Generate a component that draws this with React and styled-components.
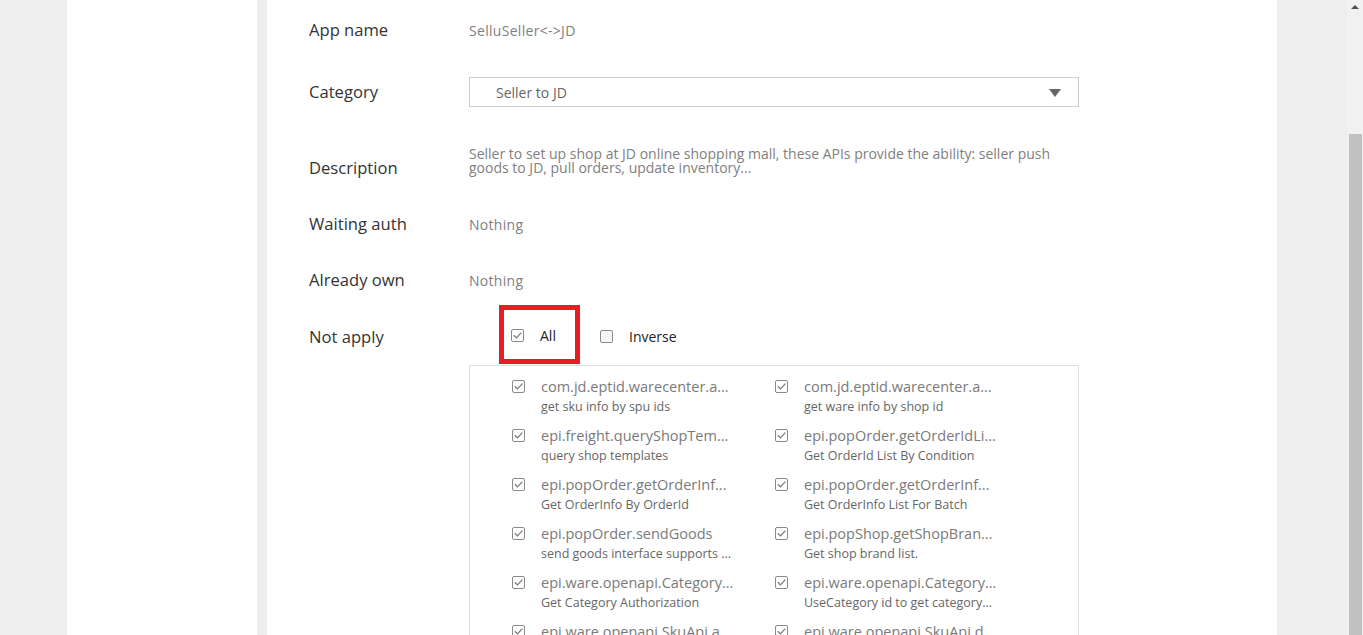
import styled, { createGlobalStyle } from 'styled-components';

const GlobalStyle = createGlobalStyle`
    html, body {
        margin: 0;
        padding: 0;
        background: #eeeeee;
        font-family: "Open Sans", "Noto Sans", sans-serif;
    }
`;

const Page = styled.div`
    display: flex;
    height: 635px;
    overflow: hidden;
    background: #eeeeee;
`;

const Main = styled.div`
    flex: 1;
    display: flex;
    gap: 10px;
    padding-left: 67px;
    padding-right: 70px;
`;

const Sidebar = styled.div`
    width: 190px;
    flex-shrink: 0;
    background: #ffffff;
`;

const Content = styled.div`
    flex: 1;
    background: #ffffff;
    padding-left: 42px;
`;

const Row = styled.div`
    display: flex;
    align-items: ${p => p.$align || 'center'};
    height: ${p => p.$h}px;
`;

const Label = styled.div`
    width: 160px;
    flex-shrink: 0;
    font-size: 16.6px;
    line-height: 24px;
    color: #333333;
    margin-top: ${p => p.$top || 0}px;
`;

const Value = styled.div`
    font-size: 14px;
    letter-spacing: 0.3px;
    color: #808080;
`;

const Description = styled.div`
    width: 610px;
    font-size: 14px;
    line-height: 14px;
    color: #808080;
    margin-top: 23px;
`;

const Select = styled.div`
    width: 610px;
    height: 30px;
    box-sizing: border-box;
    border: 1px solid #cccccc;
    display: flex;
    align-items: center;
    justify-content: space-between;
    padding: 1px 17px 0 26px;
    font-size: 14px;
    color: #666666;
`;

const Arrow = styled.span`
    width: 0;
    height: 0;
    border-left: 6px solid transparent;
    border-right: 6px solid transparent;
    border-top: 8px solid #666666;
`;

const Options = styled.div`
    display: flex;
    align-items: center;
    gap: 20px;
    padding-left: 30px;
`;

const Highlight = styled.div`
    width: 81px;
    height: 59px;
    box-sizing: border-box;
    border: 5px solid #e81c24;
    display: flex;
    align-items: center;
    padding-left: 7px;
    padding-top: 2px;
    margin-top: -5px;
`;

const Option = styled.label`
    display: flex;
    align-items: center;
    gap: 16px;
    font-size: 14px;
    color: #222222;
`;

const Box = styled.span`
    width: 13px;
    height: 13px;
    box-sizing: border-box;
    border: 1px solid #8a8a8a;
    border-radius: 2px;
    background: ${p => (p.$on ? '#ffffff' : '#f6f6f6')};
    display: flex;
    align-items: center;
    justify-content: center;
    flex-shrink: 0;
`;

const ListRow = styled.div`
    padding-left: 160px;
`;

const List = styled.div`
    width: 610px;
    height: 300px;
    box-sizing: border-box;
    border: 1px solid #dddddd;
    border-bottom: none;
    padding: 12px 0 0 42px;
    display: grid;
    grid-template-columns: 263px 263px;
    grid-auto-rows: 38px;
    row-gap: 11px;
`;

const Item = styled.div`
    display: flex;
    align-items: flex-start;
    gap: 16px;
`;

const ItemBox = styled(Box)`
    margin-top: 2px;
`;

const ItemText = styled.div`
    display: flex;
    flex-direction: column;
`;

const ItemTitle = styled.div`
    font-size: 14.5px;
    line-height: 18px;
    color: #7a7a7a;
    white-space: nowrap;
`;

const ItemSub = styled.div`
    font-size: 12.5px;
    line-height: 21px;
    color: #666666;
    white-space: nowrap;
`;

const Scrollbar = styled.div`
    width: 16px;
    flex-shrink: 0;
    background: #f1f1f1;
    display: flex;
    flex-direction: column;
    align-items: center;
`;

const ScrollArrow = styled.span`
    margin-top: 5px;
    width: 0;
    height: 0;
    border-left: 4px solid transparent;
    border-right: 4px solid transparent;
    border-bottom: 4px solid #505050;
`;

const Thumb = styled.div`
    width: 13px;
    margin-top: 125px;
    flex: 1;
    background: #c1c1c1;
`;

const Check = () => (
    <svg width="11" height="11" viewBox="0 0 11 11">
        <path d="M1.8 5.3 L4.4 7.9 L9.4 2.6" fill="none" stroke="#7a7a7a" strokeWidth="1.3" />
    </svg>
);

const apis = [
    ['com.jd.eptid.warecenter.a...', 'get sku info by spu ids'],
    ['com.jd.eptid.warecenter.a...', 'get ware info by shop id'],
    ['epi.freight.queryShopTem...', 'query shop templates'],
    ['epi.popOrder.getOrderIdLi...', 'Get OrderId List By Condition'],
    ['epi.popOrder.getOrderInf...', 'Get OrderInfo By OrderId'],
    ['epi.popOrder.getOrderInf...', 'Get OrderInfo List For Batch'],
    ['epi.popOrder.sendGoods', 'send goods interface supports ...'],
    ['epi.popShop.getShopBran...', 'Get shop brand list.'],
    ['epi.ware.openapi.Category...', 'Get Category Authorization'],
    ['epi.ware.openapi.Category...', 'UseCategory id to get category...'],
    ['epi.ware.openapi.SkuApi.a...', 'add sku'],
    ['epi.ware.openapi.SkuApi.d...', 'delete sku'],
];

export default function App() {
    return (
        <Page>
            <GlobalStyle />
            <Main>
                <Sidebar />
                <Content>
                    <Row $h={60}>
                        <Label>App name</Label>
                        <Value>SelluSeller&lt;-&gt;JD</Value>
                    </Row>
                    <Row $h={64}>
                        <Label>Category</Label>
                        <Select>
                            Seller to JD
                            <Arrow />
                        </Select>
                    </Row>
                    <Row $h={72} $align="flex-start">
                        <Label $top={32}>Description</Label>
                        <Description>
                            Seller to set up shop at JD online shopping mall, these APIs provide the ability: seller push goods to JD, pull orders, update inventory...
                        </Description>
                    </Row>
                    <Row $h={56}>
                        <Label>Waiting auth</Label>
                        <Value>Nothing</Value>
                    </Row>
                    <Row $h={56}>
                        <Label>Already own</Label>
                        <Value>Nothing</Value>
                    </Row>
                    <Row $h={57}>
                        <Label>Not apply</Label>
                        <Options>
                            <Highlight>
                                <Option>
                                    <Box $on><Check /></Box>
                                    All
                                </Option>
                            </Highlight>
                            <Option>
                                <Box />
                                Inverse
                            </Option>
                        </Options>
                    </Row>
                    <ListRow>
                        <List>
                            {apis.map(([name, desc], i) => (
                                <Item key={i}>
                                    <ItemBox $on><Check /></ItemBox>
                                    <ItemText>
                                        <ItemTitle>{name}</ItemTitle>
                                        <ItemSub>{desc}</ItemSub>
                                    </ItemText>
                                </Item>
                            ))}
                        </List>
                    </ListRow>
                </Content>
            </Main>
            <Scrollbar>
                <ScrollArrow />
                <Thumb />
            </Scrollbar>
        </Page>
    );
}
